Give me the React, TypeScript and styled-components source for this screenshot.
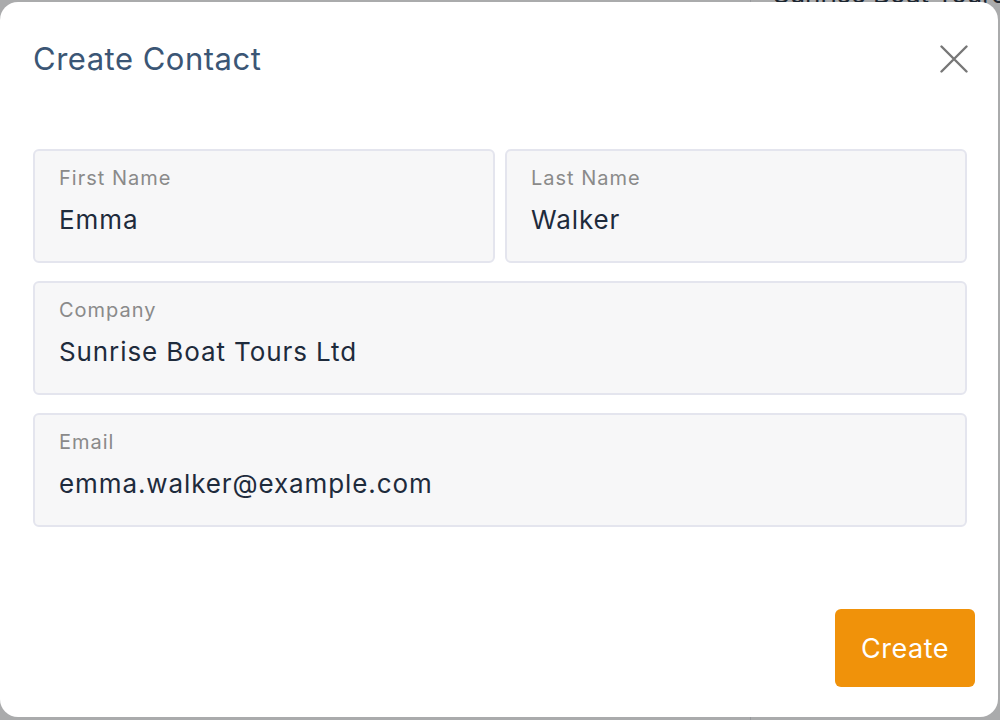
import React from "react";
import styled, { createGlobalStyle } from "styled-components";

const GlobalStyle = createGlobalStyle`
  html, body {
    margin: 0;
    padding: 0;
    height: 100%;
    overflow: hidden;
    background: #f4f5f7;
  }
  * { box-sizing: border-box; }
  body {
    font-family: Inter, "Noto Sans", sans-serif;
  }
`;

const Page = styled.div`
  height: 720px;
  display: flex;
  justify-content: flex-end;
`;

const BackColumn = styled.div`
  width: 250px;
  border-left: 1px solid #d8dbe0;
  padding-left: 22px;
  font-size: 26px;
  color: #1f2d3d;
  margin-top: -22px;
  white-space: nowrap;
  overflow: hidden;
`;

const Overlay = styled.div`
  position: fixed;
  inset: 0;
  background: rgba(20, 20, 20, 0.33);
  display: flex;
  padding: 2px 2px 3px 0;
`;

const Modal = styled.div`
  flex: 1;
  background: #fff;
  border-radius: 18px;
  display: flex;
  flex-direction: column;
  padding: 37px 23px 30px 33px;
`;

const Header = styled.div`
  display: flex;
  align-items: center;
  justify-content: space-between;
  padding-right: 6px;
  margin-bottom: 70px;
`;

const Title = styled.h2`
  margin: 0;
  font-size: 31px;
  line-height: 40px;
  font-weight: 400;
  letter-spacing: 0.5px;
  color: #3b5675;
`;

const CloseButton = styled.button`
  border: 0;
  background: none;
  padding: 0;
  width: 30px;
  height: 30px;
  display: flex;
  align-items: center;
  justify-content: center;
  cursor: pointer;
`;

const Form = styled.div`
  display: grid;
  grid-template-columns: 1fr 1fr;
  gap: 18px 10px;
  padding-right: 8px;
`;

const Field = styled.label<{ $wide?: boolean }>`
  grid-column: ${(p) => (p.$wide ? "1 / -1" : "auto")};
  height: 114px;
  background: #f7f7f8;
  border: 2px solid #e4e5ee;
  border-radius: 6px;
  padding: 15px 24px;
  display: flex;
  flex-direction: column;
  gap: 14px;
`;

const Label = styled.span`
  font-size: 20px;
  line-height: 24px;
  letter-spacing: 1px;
  color: #8a8a8a;
`;

const Value = styled.span`
  font-size: 26px;
  line-height: 32px;
  letter-spacing: 0.9px;
  color: #1e2b3c;
`;

const Footer = styled.div`
  margin-top: auto;
  display: flex;
  justify-content: flex-end;
`;

const PrimaryButton = styled.button`
  width: 140px;
  height: 78px;
  border: 0;
  border-radius: 6px;
  background: #f0920a;
  color: #fff;
  font-family: inherit;
  font-size: 27px;
  letter-spacing: 0.5px;
  cursor: pointer;
`;

const fields = [
  { label: "First Name", value: "Emma" },
  { label: "Last Name", value: "Walker" },
  { label: "Company", value: "Sunrise Boat Tours Ltd", wide: true },
  { label: "Email", value: "emma.walker@example.com", wide: true },
];

export default function App() {
  return (
    <>
      <GlobalStyle />
      <Page>
        <BackColumn>Sunrise Boat Tours</BackColumn>
      </Page>
      <Overlay>
        <Modal>
          <Header>
            <Title>Create Contact</Title>
            <CloseButton aria-label="Close">
              <svg width="28" height="28" viewBox="0 0 28 28" fill="none">
                <path
                  d="M1.5 1.5 L26.5 26.5 M26.5 1.5 L1.5 26.5"
                  stroke="#777"
                  strokeWidth="2.4"
                  strokeLinecap="round"
                />
              </svg>
            </CloseButton>
          </Header>
          <Form>
            {fields.map((f) => (
              <Field key={f.label} $wide={f.wide}>
                <Label>{f.label}</Label>
                <Value>{f.value}</Value>
              </Field>
            ))}
          </Form>
          <Footer>
            <PrimaryButton>Create</PrimaryButton>
          </Footer>
        </Modal>
      </Overlay>
    </>
  );
}
